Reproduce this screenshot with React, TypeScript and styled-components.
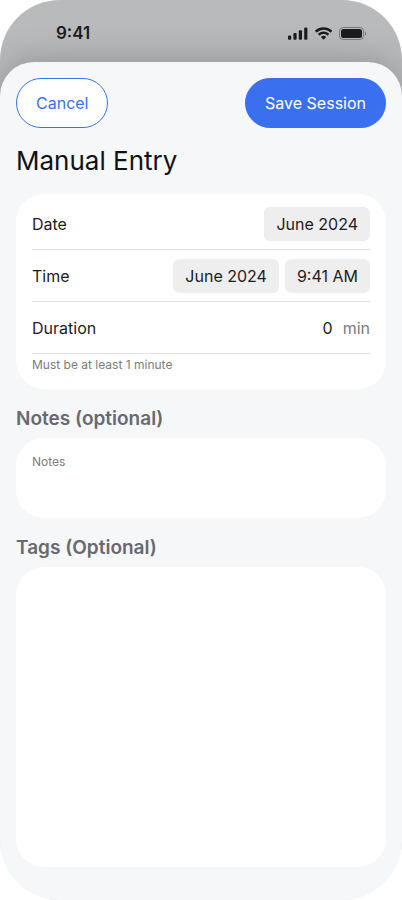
import React, { useState } from "react";
import styled, { createGlobalStyle, css } from "styled-components";

const GlobalStyle = createGlobalStyle`
  *, *::before, *::after { box-sizing: border-box; }
  body {
    margin: 0;
    background: #fff;
    color: #1c1c1e;
    font-family: Inter, "Liberation Sans", sans-serif;
    -webkit-font-smoothing: antialiased;
  }
  button, input, textarea { font: inherit; color: inherit; margin: 0; }
`;

const Screen = styled.div`
  display: flex;
  flex-direction: column;
  min-height: 100vh;
  border-radius: 60px;
  overflow: hidden;
  background: linear-gradient(#b9babc 200px, #f5f7f9 200px);
`;

const StatusBar = styled.header`
  display: flex;
  align-items: center;
  justify-content: space-between;
  height: 62px;
  padding: 4px 36px 0 56px;
`;

const Clock = styled.time`
  font-size: 17px;
  line-height: 22px;
  font-weight: 600;
`;

const StatusIcons = styled.div`
  display: flex;
  align-items: center;
  gap: 7px;

  svg { display: block; }
`;

const Sheet = styled.main`
  flex: 1;
  padding: 16px 16px 33px;
  border-radius: 34px 34px 0 0;
  background: #f5f7f9;
  box-shadow: 0 0 36px rgba(0, 0, 0, 0.24);
`;

const Toolbar = styled.div`
  display: flex;
  justify-content: space-between;
`;

const PillButton = styled.button<{ $primary?: boolean }>`
  height: 50px;
  padding: 0 19px;
  border: 1px solid #3a70f0;
  border-radius: 25px;
  font-size: 16px;
  line-height: 24px;
  cursor: pointer;
  ${({ $primary }) =>
    $primary
      ? css`
          background: #3a70f0;
          color: #fff;
        `
      : css`
          background: #fff;
          color: #3a70f0;
        `}
`;

const Title = styled.h1`
  margin: 16px 0;
  font-size: 26px;
  line-height: 34px;
  font-weight: 400;
  color: #111214;
`;

const Card = styled.div`
  padding: 4px 16px 16px;
  border-radius: 28px;
  background: #fff;
`;

const Row = styled.div`
  display: flex;
  align-items: center;
  justify-content: space-between;
  height: 52px;
  border-bottom: 1px solid #e3e3e5;
  font-size: 16px;
  line-height: 22px;
`;

const Values = styled.div`
  display: flex;
  align-items: center;
  gap: 6px;
`;

const Chip = styled.button`
  height: 34px;
  padding: 0 12px;
  border: 0;
  border-radius: 6px;
  background: #eeeeee;
  cursor: pointer;
`;

const MinutesInput = styled.input`
  width: 48px;
  padding: 0;
  border: 0;
  outline: 0;
  background: transparent;
  text-align: right;
`;

const Unit = styled.span`
  padding-left: 4px;
  color: #7c7c80;
`;

const Hint = styled.p`
  margin: 0;
  padding-top: 3px;
  font-size: 12px;
  line-height: 16px;
  color: #7c7c80;
`;

const SectionLabel = styled.label`
  display: block;
  margin: 17px 0 7px;
  font-size: 19px;
  line-height: 25px;
  font-weight: 600;
  color: #68696f;
`;

const TextField = styled.textarea<{ $tall?: boolean }>`
  display: block;
  width: 100%;
  height: ${({ $tall }) => ($tall ? 300 : 80)}px;
  padding: 16px;
  border: 0;
  border-radius: 28px;
  outline: 0;
  resize: none;
  background: #fff;
  font-size: 12px;
  line-height: 16px;

  &::placeholder { color: #7c7c80; opacity: 1; }
`;

const SignalIcon = () => (
  <svg width="20" height="13" viewBox="0 0 20 13" fill="#1c1c1e" aria-hidden="true">
    <rect x="0" y="8.5" width="3.2" height="4.2" rx="1" />
    <rect x="5.4" y="6" width="3.2" height="6.7" rx="1" />
    <rect x="10.8" y="3.2" width="3.2" height="9.5" rx="1" />
    <rect x="16.2" y="0.4" width="3.2" height="12.3" rx="1" />
  </svg>
);

const WifiIcon = () => (
  <svg width="17" height="13" viewBox="0 0 17 12.4" fill="#1c1c1e" aria-hidden="true">
    <path d="M8.57 2.47c2.49 0 4.88.95 6.69 2.67.13.13.35.13.49 0l1.3-1.32a.36.36 0 0 0 0-.53C12.31-1.1 4.83-1.1.09 3.29a.36.36 0 0 0 0 .53l1.3 1.32c.14.13.36.13.49 0a9.7 9.7 0 0 1 6.69-2.67Z" />
    <path d="M8.57 6.76c1.37 0 2.69.51 3.7 1.43.14.13.35.13.49 0l1.3-1.32a.37.37 0 0 0 0-.54 8 8 0 0 0-10.98 0 .37.37 0 0 0 0 .54l1.3 1.32c.14.13.35.13.49 0a5.500 5.500 0 0 1 3.7-1.430Z" />
    <path d="M11.11 9.650a.37.37 0 0 1-.1.270l-2.200 2.210a.35.35 0 0 1-.5 0L6.110 9.920a.37.37 0 0 1 .01-.540 3.820 3.820 0 0 1 4.890 0c.06.070.1.170.1.270Z" />
  </svg>
);

const BatteryIcon = () => (
  <svg width="27" height="13" viewBox="0 0 27 13" aria-hidden="true">
    <rect x="0.5" y="0.5" width="24" height="12" rx="3.8" fill="none" stroke="#1c1c1e" strokeOpacity="0.4" />
    <rect x="2" y="2" width="21" height="9" rx="2.5" fill="#1c1c1e" />
    <path d="M26 4.600v4c.8-.35 1.330-1.130 1.330-2S26.800 4.950 26 4.600Z" fill="#1c1c1e" fillOpacity="0.45" />
  </svg>
);

export default function App() {
  const [minutes, setMinutes] = useState("0");
  const [notes, setNotes] = useState("");
  const [tags, setTags] = useState("");

  return (
    <>
      <GlobalStyle />
      <Screen>
        <StatusBar>
          <Clock>9:41</Clock>
          <StatusIcons>
            <SignalIcon />
            <WifiIcon />
            <BatteryIcon />
          </StatusIcons>
        </StatusBar>
        <Sheet>
          <Toolbar>
            <PillButton type="button">Cancel</PillButton>
            <PillButton type="button" $primary>Save Session</PillButton>
          </Toolbar>
          <Title>Manual Entry</Title>
          <Card>
            <Row>
              <span id="date-label">Date</span>
              <Values role="group" aria-labelledby="date-label">
                <Chip type="button">June 2024</Chip>
              </Values>
            </Row>
            <Row>
              <span id="time-label">Time</span>
              <Values role="group" aria-labelledby="time-label">
                <Chip type="button">June 2024</Chip>
                <Chip type="button">9:41 AM</Chip>
              </Values>
            </Row>
            <Row>
              <label htmlFor="duration">Duration</label>
              <Values>
                <MinutesInput
                  id="duration"
                  inputMode="numeric"
                  aria-describedby="duration-hint"
                  value={minutes}
                  onChange={(e) => setMinutes(e.target.value)}
                />
                <Unit>min</Unit>
              </Values>
            </Row>
            <Hint id="duration-hint">Must be at least 1 minute</Hint>
          </Card>
          <SectionLabel htmlFor="notes">Notes (optional)</SectionLabel>
          <TextField
            id="notes"
            placeholder="Notes"
            value={notes}
            onChange={(e) => setNotes(e.target.value)}
          />
          <SectionLabel htmlFor="tags">Tags (Optional)</SectionLabel>
          <TextField
            id="tags"
            $tall
            value={tags}
            onChange={(e) => setTags(e.target.value)}
          />
        </Sheet>
      </Screen>
    </>
  );
}
